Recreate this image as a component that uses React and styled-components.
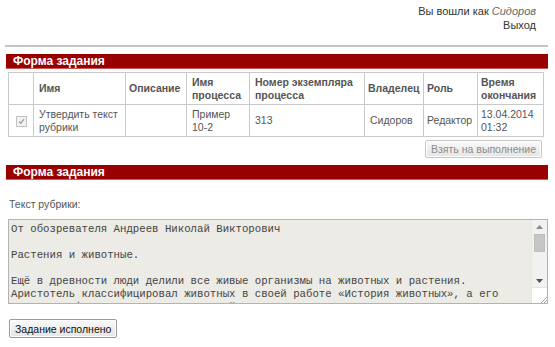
import React from "react";
import styled, { createGlobalStyle } from "styled-components";

const Global = createGlobalStyle`
  html, body { margin: 0; padding: 0; background: #fff; }
  body { font-family: "Liberation Sans", Arial, sans-serif; font-size: 11px; color: #555; }
`;

const Page = styled.div`
  width: 555px;
  height: 347px;
  box-sizing: border-box;
  padding: 5px 7px 0 6px;
  overflow: hidden;
`;

const UserBar = styled.div`
  display: flex;
  flex-direction: column;
  align-items: flex-end;
  padding-right: 12px;
  font-size: 11px;
  line-height: 13px;
  color: #333;
  gap: 1px;
`;

const UserName = styled.em`
  color: #666;
`;

const Rule = styled.hr`
  margin: 13px 0 0 -1px;
  border: 0;
  border-top: 2px solid #c4c4c4;
  height: 0;
`;

const SectionBar = styled.div`
  margin-top: ${(p) => p.$top}px;
  height: 14px;
  background: #990000;
  border-bottom: 1px solid #c65b5b;
  color: #fff;
  font-weight: bold;
  font-size: 12px;
  line-height: 15px;
  padding-left: 7px;
`;

const Table = styled.table`
  margin: 3px 0 0 2px;
  width: 535px;
  border-collapse: collapse;
  table-layout: fixed;
  font-size: 10.5px;
  color: #555;
  line-height: 13px;
`;

const Row = styled.tr`
  height: 32px;
`;

const Th = styled.th`
  border: 1px solid #c9c9c9;
  text-align: left;
  font-weight: bold;
  padding: 0 0 0 ${(p) => p.$pl ?? 5}px;
  vertical-align: middle;
`;

const Td = styled.td`
  border: 1px solid #c9c9c9;
  padding: 0 0 0 ${(p) => p.$pl ?? 5}px;
  vertical-align: middle;
  text-align: ${(p) => (p.$center ? "center" : "left")};
`;

const NoWrap = styled.span`
  white-space: nowrap;
`;

const CheckBox = styled.span`
  display: inline-block;
  width: 9px;
  height: 9px;
  border: 1px solid #c2c2c2;
  background: #f2f2f2;
  position: relative;
  vertical-align: middle;
  svg { position: absolute; left: 1px; top: 1px; }
`;

const ButtonRow = styled.div`
  display: flex;
  justify-content: flex-end;
  padding-right: 6px;
  margin-top: 3px;
`;

const Button = styled.button`
  font-family: "Liberation Sans", Arial, sans-serif;
  font-size: 10.5px;
  height: ${(p) => p.$h}px;
  padding: 0 ${(p) => p.$px}px;
  border: 1px solid ${(p) => (p.disabled ? "#c6c6c6" : "#9a9a9a")};
  border-radius: 2px;
  background: linear-gradient(#fafafa, #e4e4e4);
  color: ${(p) => (p.disabled ? "#8a8a8a" : "#111")};
  box-shadow: inset 0 0 0 1px #fff;
  cursor: default;
`;

const Label = styled.div`
  margin: 18px 0 0 3px;
  font-size: 10.5px;
  color: #555;
  line-height: 13px;
`;

const TextBox = styled.div`
  margin: 8px 0 0 2px;
  height: 85px;
  box-sizing: border-box;
  border: 1px solid #b3b3b3;
  display: flex;
  background: #ecebe5;
`;

const TextContent = styled.pre`
  flex: 1;
  margin: 0;
  padding: 3px 2px;
  overflow: hidden;
  font-family: "Liberation Mono", "Courier New", monospace;
  font-size: 10.7px;
  line-height: 13px;
  color: #444;
  white-space: pre;
`;

const ScrollBar = styled.div`
  width: 15px;
  display: flex;
  flex-direction: column;
  background: #f1f1f1;
  border-left: 1px solid #e6e6e6;
`;

const Arrow = styled.div`
  height: 13px;
  display: flex;
  align-items: center;
  justify-content: center;
`;

const Track = styled.div`
  flex: 1;
  display: flex;
  flex-direction: column;
  padding: 1px 2px;
`;

const Thumb = styled.div`
  height: 16px;
  background: #c6c6c6;
  border: 1px solid #bdbdbd;
`;

const Grip = styled.div`
  height: 15px;
  background: #fff;
  border-top: 1px solid #e6e6e6;
  display: flex;
  align-items: flex-end;
  justify-content: flex-end;
`;

const Footer = styled.div`
  margin: 15px 0 0 3px;
`;

const text = `От обозревателя Андреев Николай Викторович

Растения и животные.

Ещё в древности люди делили все живые организмы на животных и растения.
Аристотель классифицировал животных в своей работе «История животных», а его
ученик Теофраст написал аналогичный труд о растениях «Исследование о растениях».`;

const cols = [25, 92, 61, 63, 115, 59, 54, 66];

export default function App() {
  return (
    <Page>
      <Global />
      <UserBar>
        <div>
          Вы вошли как <UserName>Сидоров</UserName>
        </div>
        <div>Выход</div>
      </UserBar>
      <Rule />
      <SectionBar $top={7}>Форма задания</SectionBar>
      <Table>
        <colgroup>
          {cols.map((w, i) => (
            <col key={i} style={{ width: w }} />
          ))}
        </colgroup>
        <thead>
          <Row>
            <Th />
            <Th>Имя</Th>
            <Th $pl={3}>Описание</Th>
            <Th>Имя процесса</Th>
            <Th>Номер экземпляра процесса</Th>
            <Th $pl={3}>Владелец</Th>
            <Th $pl={3}>Роль</Th>
            <Th $pl={3}>Время окончания</Th>
          </Row>
        </thead>
        <tbody>
          <Row>
            <Td $center $pl={0}>
              <CheckBox>
                <svg width="7" height="7" viewBox="0 0 7 7">
                  <path d="M1 3.5 L2.8 5.3 L6 1.2" fill="none" stroke="#9a9a9a" strokeWidth="1.3" />
                </svg>
              </CheckBox>
            </Td>
            <Td>Утвердить текст рубрики</Td>
            <Td></Td>
            <Td>
              Пример <NoWrap>10-2</NoWrap>
            </Td>
            <Td>313</Td>
            <Td>Сидоров</Td>
            <Td $pl={3}>Редактор</Td>
            <Td $pl={3}>13.04.2014 01:32</Td>
          </Row>
        </tbody>
      </Table>
      <ButtonRow>
        <Button disabled $h={18} $px={5}>
          Взять на выполнение
        </Button>
      </ButtonRow>
      <SectionBar $top={7}>Форма задания</SectionBar>
      <Label>Текст рубрики:</Label>
      <TextBox>
        <TextContent>{text}</TextContent>
        <ScrollBar>
          <Arrow>
            <svg width="7" height="4" viewBox="0 0 7 4">
              <path d="M0 4 L3.5 0 L7 4 Z" fill="#8a8a8a" />
            </svg>
          </Arrow>
          <Track>
            <Thumb />
          </Track>
          <Arrow>
            <svg width="7" height="4" viewBox="0 0 7 4">
              <path d="M0 0 L3.5 4 L7 0 Z" fill="#505050" />
            </svg>
          </Arrow>
          <Grip>
            <svg width="8" height="8" viewBox="0 0 8 8">
              <path d="M8 2 L2 8 M8 5 L5 8" stroke="#a0a0a0" strokeWidth="1" />
            </svg>
          </Grip>
        </ScrollBar>
      </TextBox>
      <Footer>
        <Button $h={19} $px={5}>Задание исполнено</Button>
      </Footer>
    </Page>
  );
}
